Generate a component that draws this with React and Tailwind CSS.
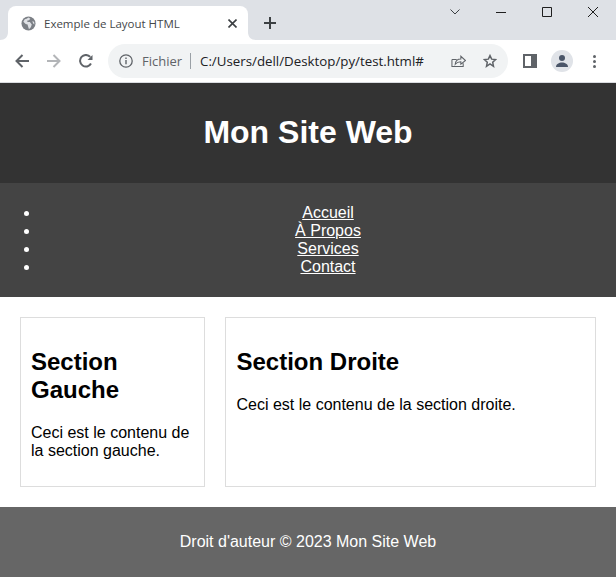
const ui = "font-['Open_Sans','Noto_Sans',sans-serif]";

function Globe() {
  return (
    <svg width="15" height="15" viewBox="0 0 16 16">
      <circle cx="8" cy="8" r="7.500" fill="#7b7f85" />
      <path d="M8 1.500 6 3 4 3.500 2.500 6 5 8.500l2 .5.5 2 1 3 2-2 1-3-2-2.500H7L6.500 5 8.500 4.500 10 3z" fill="#dfe1e5" />
      <path d="M12 5.500l2 .5.300 3-1.300-1z" fill="#dfe1e5" />
    </svg>
  );
}

function Stroke({ w = 16, h = 16, vb, color = "#5f6368", sw = 2, d }) {
  return (
    <svg width={w} height={h} viewBox={vb || `0 0 ${w} ${h}`} fill="none" stroke={color} strokeWidth={sw}>
      <path d={d} />
    </svg>
  );
}

function Flare({ flip }) {
  return (
    <svg width="8" height="8" viewBox="0 0 8 8" className={flip ? "absolute bottom-0 left-full" : "absolute bottom-0 right-full"}>
      <path d={flip ? "M0 0C0 5 3 8 8 8H0z" : "M8 0C8 5 5 8 0 8H8z"} fill="#ffffff" />
    </svg>
  );
}

function Chrome() {
  return (
    <div className={ui}>
      <div className="flex h-10 items-end bg-[#dee1e6] pl-2">
        <div className="relative flex h-[34px] w-60 items-center rounded-t-lg bg-white pl-[13px] pr-[11px]">
          <Flare />
          <Flare flip />
          <Globe />
          <span className="ml-[8px] mt-px flex-1 text-[11.5px] leading-none text-[#45474a]">Exemple de Layout HTML</span>
          <Stroke w={9} h={9} color="#3c4043" sw={1.6} d="M.5.5l8 8M8.500.5l-8 8" />
        </div>
        <div className="mb-[11px] ml-4 flex items-center">
          <Stroke w={12} h={12} color="#3c4043" sw={2} d="M6 0v12M0 6h12" />
        </div>
        <div className="ml-auto flex h-6 items-center gap-9 self-start pr-[18px]">
          <Stroke w={10} h={6} color="#3c4043" sw={1} d="M.5.5 5 5 9.500.5" />
          <Stroke w={10} h={1} color="#1f1f1f" sw={1} d="M0 .5h10" />
          <Stroke w={10} h={10} color="#1f1f1f" sw={1} d="M.5.5h9v9h-9z" />
          <Stroke w={10} h={10} color="#1f1f1f" sw={1} d="M0 0l10 10M10 0 0 10" />
        </div>
      </div>
      <div className="flex h-[43px] items-center border-b border-[#dadce0] bg-white pl-[15px]">
        <Stroke w={14} h={14} sw={2} d="M14 7H2M7.500 1 1.500 7l6 6" />
        <div className="ml-[18px]"><Stroke w={14} h={14} color="#b3b5b8" sw={2} d="M0 7h12M6.500 1l6 6-6 6" /></div>
        <div className="ml-[18px]">
          <svg width="14" height="14" viewBox="0 0 14 14" fill="none">
            <path d="M12 9.500A5.800 5.800 0 1 1 11.200 2.900" stroke="#5f6368" strokeWidth="2" />
            <path d="M13.500 1v5h-5z" fill="#5f6368" />
          </svg>
        </div>
        <div className="ml-[15px] flex h-[34px] w-[400px] items-center rounded-full bg-[#f1f3f4] pl-[11px] pr-[11px]">
          <svg width="14" height="14" viewBox="0 0 14 14" fill="none">
            <circle cx="7" cy="7" r="6.200" stroke="#5f6368" strokeWidth="1.300" />
            <path d="M7 6v4.200" stroke="#5f6368" strokeWidth="1.400" />
            <path d="M7 3.500v1.400" stroke="#5f6368" strokeWidth="1.400" />
          </svg>
          <span className="ml-[9px] w-10 text-[13px] leading-none text-[#5f6368]">Fichier</span>
          <div className="ml-2 h-[16px] w-px bg-[#9aa0a6]" />
          <span className="ml-[9px] mt-px flex-1 text-[13.300px] leading-none text-[#202124]">C:/Users/dell/Desktop/py/test.html#</span>
          <div className="mb-[2px]">
            <Stroke w={15} h={15} vb="0 0 16 16" color="#5f6368" sw={1.100} d="M1 7v7.500h12V11M1 7h5M4.500 12c.300-4 3-5.600 6-5.600V3.500l5 4.500-5 4V9.300c-2.500 0-4.500.800-6 2.700z" />
          </div>
          <div className="ml-[17px]">
            <svg width="14" height="14" viewBox="0 0 16 16" fill="none" stroke="#5f6368" strokeWidth="1.700">
              <path d="M8 1.800l1.900 4.100 4.500.5-3.300 3.100.900 4.500L8 11.200l-4 2.800.900-4.500L1.600 6.400l4.500-.5z" />
            </svg>
          </div>
        </div>
        <div className="ml-[15px] flex h-[14px] w-[14px] justify-end border-2 border-[#5f6368] bg-white">
          <div className="h-full w-[4px] bg-[#5f6368]" />
        </div>
        <div className="ml-[14px] flex h-[22px] w-[22px] items-center justify-center rounded-full bg-[#e0e3e8]">
          <svg width="14" height="14" viewBox="0 0 14 14" fill="#4a5568">
            <circle cx="7" cy="4" r="3" />
            <path d="M1 13c0-3 3-4.500 6-4.500s6 1.500 6 4.500z" />
          </svg>
        </div>
        <div className="ml-[20px] flex flex-col gap-[2px]">
          <div className="h-[3px] w-[3px] rounded-full bg-[#5f6368]" />
          <div className="h-[3px] w-[3px] rounded-full bg-[#5f6368]" />
          <div className="h-[3px] w-[3px] rounded-full bg-[#5f6368]" />
        </div>
      </div>
    </div>
  );
}

export default function App() {
  const links = ["Accueil", "À Propos", "Services", "Contact"];
  return (
    <div className="h-[581px] overflow-hidden bg-white font-['Liberation_Sans',Arial,sans-serif] text-[16px] leading-[normal] text-black">
      <Chrome />
      <header className="bg-[#333333] p-[10px] text-center text-white">
        <h1 className="my-[21.44px] text-[32px] font-bold leading-[normal]">Mon Site Web</h1>
      </header>
      <nav className="bg-[#444444] py-[5px] text-white">
        <ul className="my-4 list-disc pl-10 text-center">
          {links.map((l) => (
            <li key={l}><a href="#" className="text-white underline">{l}</a></li>
          ))}
        </ul>
      </nav>
      <main className="grid grid-cols-[185.49px_1fr] gap-5 p-5">
        <section className="border border-[#dddddd] p-[10px]">
          <h2 className="my-[19.92px] text-[24px] font-bold leading-[normal]">Section Gauche</h2>
          <p className="my-4">Ceci est le contenu de la section gauche.</p>
        </section>
        <section className="border border-[#dddddd] p-[10px]">
          <h2 className="my-[19.92px] text-[24px] font-bold leading-[normal]">Section Droite</h2>
          <p className="my-4">Ceci est le contenu de la section droite.</p>
        </section>
      </main>
      <footer className="bg-[#666666] p-[10px] text-center text-white">
        <p className="my-4">Droit d'auteur © 2023 Mon Site Web</p>
      </footer>
    </div>
  );
}
